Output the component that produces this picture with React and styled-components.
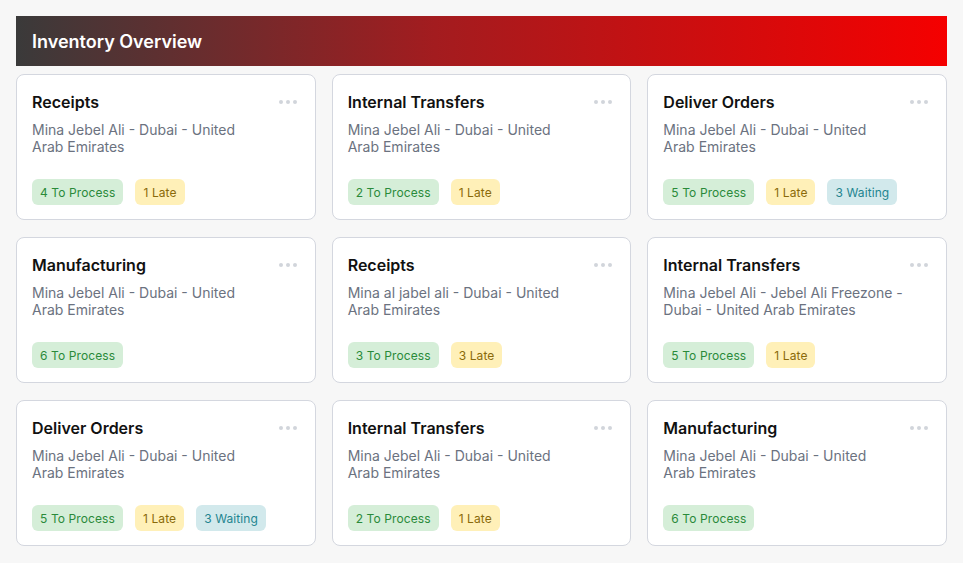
import React from 'react';
import styled, { createGlobalStyle } from 'styled-components';

const GlobalStyle = createGlobalStyle`
  body {
    margin: 0;
    background: #f7f7f7;
    font-family: Inter, "Noto Sans", sans-serif;
  }
`;

const Page = styled.div`
  padding: 16px;
  display: flex;
  flex-direction: column;
  gap: 8px;
`;

const Banner = styled.div`
  height: 50px;
  display: flex;
  align-items: center;
  padding: 0 16px;
  background: linear-gradient(90deg, #3a3a3a 0%, #a31c1f 45%, #f50000 100%);
  color: #fff;
  font-size: 18px;
  font-weight: 600;
`;

const Grid = styled.div`
  display: grid;
  grid-template-columns: repeat(3, 1fr);
  column-gap: 16px;
  row-gap: 17px;
`;

const Card = styled.div`
  background: #fff;
  border: 1px solid #d4d7df;
  border-radius: 8px;
  height: 146px;
  box-sizing: border-box;
  padding: 17px 15px 14px;
  display: flex;
  flex-direction: column;
`;

const CardHead = styled.div`
  display: flex;
  justify-content: space-between;
  align-items: flex-start;
`;

const Title = styled.div`
  font-size: 16px;
  font-weight: 600;
  color: #111;
  line-height: 20px;
`;

const Dots = styled.div`
  display: flex;
  gap: 3px;
  padding: 8px 3px 0 0;
  span {
    width: 4px;
    height: 4px;
    border-radius: 50%;
    background: #d1d5db;
  }
`;

const Desc = styled.div`
  margin-top: 9px;
  font-size: 14px;
  line-height: 17px;
  color: #6b7280;
`;

const Line = styled.div`
  white-space: nowrap;
`;

const Badges = styled.div`
  margin-top: auto;
  display: flex;
  gap: 12px;
`;

const tones = {
  green: { bg: '#d5eed8', fg: '#2a8a3a' },
  yellow: { bg: '#fff0b8', fg: '#8a6a0a' },
  teal: { bg: '#d2e9ec', fg: '#1f8590' },
};

const Badge = styled.span`
  height: 26px;
  display: inline-flex;
  align-items: center;
  padding: 0 8px;
  border-radius: 6px;
  font-size: 12px;
  letter-spacing: 0.1px;
  background: ${p => tones[p.tone].bg};
  color: ${p => tones[p.tone].fg};
`;

const loc = ['Mina Jebel Ali - Dubai - United', 'Arab Emirates'];

const cards = [
  { title: 'Receipts', desc: loc, process: 4, late: 1 },
  { title: 'Internal Transfers', desc: loc, process: 2, late: 1 },
  { title: 'Deliver Orders', desc: loc, process: 5, late: 1, waiting: 3 },
  { title: 'Manufacturing', desc: loc, process: 6 },
  { title: 'Receipts', desc: ['Mina al jabel ali - Dubai - United', 'Arab Emirates'], process: 3, late: 3 },
  { title: 'Internal Transfers', desc: ['Mina Jebel Ali - Jebel Ali Freezone -', 'Dubai - United Arab Emirates'], process: 5, late: 1 },
  { title: 'Deliver Orders', desc: loc, process: 5, late: 1, waiting: 3 },
  { title: 'Internal Transfers', desc: loc, process: 2, late: 1 },
  { title: 'Manufacturing', desc: loc, process: 6 },
];

const App = () => (
  <>
    <GlobalStyle />
    <Page>
      <Banner>Inventory Overview</Banner>
      <Grid>
        {cards.map((c, i) => (
          <Card key={i}>
            <CardHead>
              <Title>{c.title}</Title>
              <Dots><span /><span /><span /></Dots>
            </CardHead>
            <Desc>
              {c.desc.map(l => <Line key={l}>{l}</Line>)}
            </Desc>
            <Badges>
              <Badge tone="green">{c.process} To Process</Badge>
              {c.late && <Badge tone="yellow">{c.late} Late</Badge>}
              {c.waiting && <Badge tone="teal">{c.waiting} Waiting</Badge>}
            </Badges>
          </Card>
        ))}
      </Grid>
    </Page>
  </>
);

export default App;
